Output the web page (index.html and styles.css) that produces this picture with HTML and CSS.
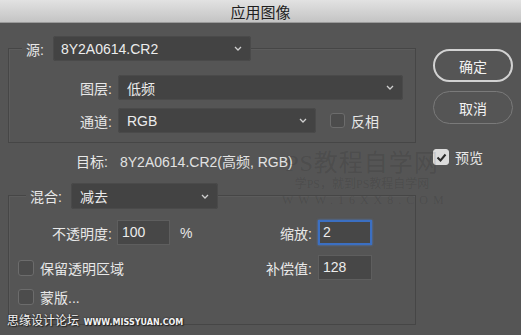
FILE: index.html
```html
<!DOCTYPE html>
<html lang="zh-CN">
<head>
  <meta charset="UTF-8" />
  <title>应用图像</title>
  <link rel="stylesheet" href="styles.css">
</head>
<body>

  <div class="titlebar">应用图像</div>

  <div class="dialog">
    <div class="main">

      <!-- SOURCE GROUP -->
      <div class="group group-source">
        <div class="legend legend-source">
          <span class="legend-label">源:</span>
          <div class="select select-source">
            <span>8Y2A0614.CR2</span>
            <svg class="chev" width="8" height="5" viewBox="0 0 8 5"><path d="M1 1l3 3 3-3" fill="none" stroke="#cfcfcf" stroke-width="1.3"/></svg>
          </div>
        </div>
        <div class="row row-layer">
          <span class="label">图层:</span>
          <div class="select select-layer">
            <span>低频</span>
            <svg class="chev" width="8" height="5" viewBox="0 0 8 5"><path d="M1 1l3 3 3-3" fill="none" stroke="#cfcfcf" stroke-width="1.3"/></svg>
          </div>
        </div>
        <div class="row row-channel">
          <span class="label">通道:</span>
          <div class="select select-channel">
            <span>RGB</span>
            <svg class="chev" width="8" height="5" viewBox="0 0 8 5"><path d="M1 1l3 3 3-3" fill="none" stroke="#cfcfcf" stroke-width="1.3"/></svg>
          </div>
          <span class="check check-invert"></span>
          <span class="check-text">反相</span>
        </div>
      </div>

      <div class="row row-target">
        <span class="label">目标:</span>
        <span class="target-value">8Y2A0614.CR2(高频, RGB)</span>
      </div>

      <!-- BLEND GROUP -->
      <div class="group group-blend">
        <div class="legend legend-blend">
          <span class="legend-label">混合:</span>
          <div class="select select-blend">
            <span>减去</span>
            <svg class="chev" width="8" height="5" viewBox="0 0 8 5"><path d="M1 1l3 3 3-3" fill="none" stroke="#cfcfcf" stroke-width="1.3"/></svg>
          </div>
        </div>
        <div class="row row-opacity">
          <span class="label label-opacity">不透明度:</span>
          <span class="field field-opacity">100</span>
          <span class="unit">%</span>
          <span class="label label-right">缩放:</span>
          <span class="field field-focus">2</span>
        </div>
        <div class="row row-preserve">
          <span class="check"></span>
          <span class="check-text">保留透明区域</span>
          <span class="label label-right">补偿值:</span>
          <span class="field">128</span>
        </div>
        <div class="row row-mask">
          <span class="check"></span>
          <span class="check-text">蒙版...</span>
        </div>
      </div>

    </div>

    <div class="side">
      <div class="btn btn-ok">确定</div>
      <div class="btn btn-cancel">取消</div>
      <div class="preview">
        <span class="check check-on">
          <svg width="11" height="9" viewBox="0 0 11 9"><path d="M1.5 4.5l3 3 5-6" fill="none" stroke="#2a2a2a" stroke-width="2"/></svg>
        </span>
        <span class="check-text">预览</span>
      </div>
    </div>
  </div>

  <!-- watermarks over the dialog -->
  <div class="wm-site">
    <div class="wm-big">PS教程自学网</div>
    <div class="wm-small">学PS，就到PS教程自学网</div>
    <div class="wm-url">WWW.16XX8.COM</div>
  </div>
  <div class="wm-forum">思缘设计论坛 <span>WWW.MISSYUAN.COM</span></div>

</body>
</html>
```

FILE: styles.css
```css
body {
  margin: 0;
  width: 521px;
  height: 335px;
  overflow: hidden;
  background: #555555;
  font-family: "Liberation Sans", "Noto Sans CJK SC", sans-serif;
  font-size: 14px;
  color: #e8e8e8;
  position: relative;
}

.titlebar {
  height: 23px;
  line-height: 23px;
  text-align: center;
  background: linear-gradient(#e2e2e2, #c4c4c4);
  border-bottom: 1px solid #9a9a9a;
  color: #1e1e1e;
  font-size: 15px;
  font-family: "Noto Sans CJK SC", sans-serif;
  box-sizing: border-box;
}

.dialog {
  display: flex;
  padding: 13px 0 0 8px;
}

.main {
  width: 408px;
}

.group {
  border: 1px solid #464646;
  box-shadow: inset 1px 1px 0 #5c5c5c;
}

.group-source {
  margin-top: 12px;
  padding-bottom: 9px;
}

.group-blend {
  margin-top: 26px;
  padding: 0 43px 15px 0;
}

.legend {
  display: flex;
  align-items: center;
  margin-top: -13px;
}

.legend-source { margin-left: 13px; }
.legend-blend { margin-left: 17px; }

.legend-label {
  background: #555555;
  padding: 0 9px 0 4px;
}

.select {
  display: flex;
  align-items: center;
  justify-content: space-between;
  box-sizing: border-box;
  height: 25px;
  padding: 0 9px 0 9px;
  background: #434343;
  border-radius: 3px;
  color: #ececec;
  box-shadow: inset 0 0 0 1px #4a4a4a;
}

.select-source { width: 198px; padding-left: 8px; }
.select-layer { width: 285px; }
.select-channel { width: 198px; }
.select-blend { width: 147px; height: 26px; }

.row {
  display: flex;
  align-items: center;
}

.label {
  width: 103px;
  text-align: right;
  margin-right: 6px;
}

.row-layer { margin-top: 14px; }
.row-channel { margin-top: 8px; }

.check {
  display: inline-flex;
  align-items: center;
  justify-content: center;
  width: 15px;
  height: 15px;
  box-sizing: border-box;
  border: 1px solid #6c6c6c;
  border-radius: 3px;
  background: #4c4c4c;
}

.check-invert { margin-left: 14px; }

.check-text {
  margin-left: 6px;
}

.row-target {
  margin-top: 9px;
  height: 17px;
}

.row-target .label {
  width: 100px;
  margin-right: 12px;
}

.target-value {
  color: #e2e2e2;
}

.field {
  box-sizing: border-box;
  width: 54px;
  height: 25px;
  line-height: 23px;
  padding-left: 4px;
  background: #474747;
  border: 1px solid #5e5e5e;
  color: #ececec;
}

.field-opacity {
  margin-left: -1px;
  width: 53px;
}

.field-focus {
  border: 2px solid #3b6fc2;
  line-height: 21px;
  padding-left: 3px;
  box-shadow: 0 0 2px #4a7ed0;
}

.unit {
  margin-left: 10px;
}

.label-right {
  margin-left: auto;
  width: auto;
}

.row-opacity { margin-top: 11px; }
.row-preserve { margin-top: 10px; }
.row-mask { margin-top: 4px; height: 25px; }

.row-preserve .check,
.row-mask .check {
  margin-left: 9px;
  width: 16px;
  height: 16px;
}

.side {
  display: flex;
  flex-direction: column;
  margin-left: 17px;
}

.btn {
  box-sizing: border-box;
  width: 80px;
  height: 33px;
  border-radius: 17px;
  display: flex;
  align-items: center;
  justify-content: center;
  font-family: "Noto Sans CJK SC", sans-serif;
  font-size: 14px;
  color: #f2f2f2;
}

.btn-ok {
  margin-top: 13px;
  border: 2px solid #d2d2d2;
}

.btn-cancel {
  margin-top: 9px;
  border: 1.5px solid #7a7a7a;
}

.preview {
  display: flex;
  align-items: center;
  margin-top: 23px;
}

.check-on {
  background: #dcdcdc;
  border-color: #dcdcdc;
  width: 16px;
  height: 16px;
}

.wm-site {
  position: absolute;
  left: 282px;
  top: 149px;
  width: 160px;
  text-align: center;
  color: rgba(0, 0, 0, 0.11);
  font-family: "Liberation Serif", "Noto Sans CJK SC", serif;
}

.wm-big {
  font-size: 24px;
  line-height: 28px;
  letter-spacing: 1px;
}

.wm-small {
  font-size: 12px;
  line-height: 14px;
}

.wm-url {
  font-size: 12px;
  line-height: 18px;
  letter-spacing: 5px;
}

.wm-forum {
  position: absolute;
  left: 7px;
  top: 311px;
  font-family: "Noto Sans CJK SC", sans-serif;
  font-size: 12px;
  color: #f4f4f4;
  text-shadow: 0 0 2px #222, 1px 1px 1px #222;
}

.wm-forum span {
  font-family: "DejaVu Sans", sans-serif;
  font-size: 8px;
  font-weight: bold;
  margin-left: 2px;
}
```
